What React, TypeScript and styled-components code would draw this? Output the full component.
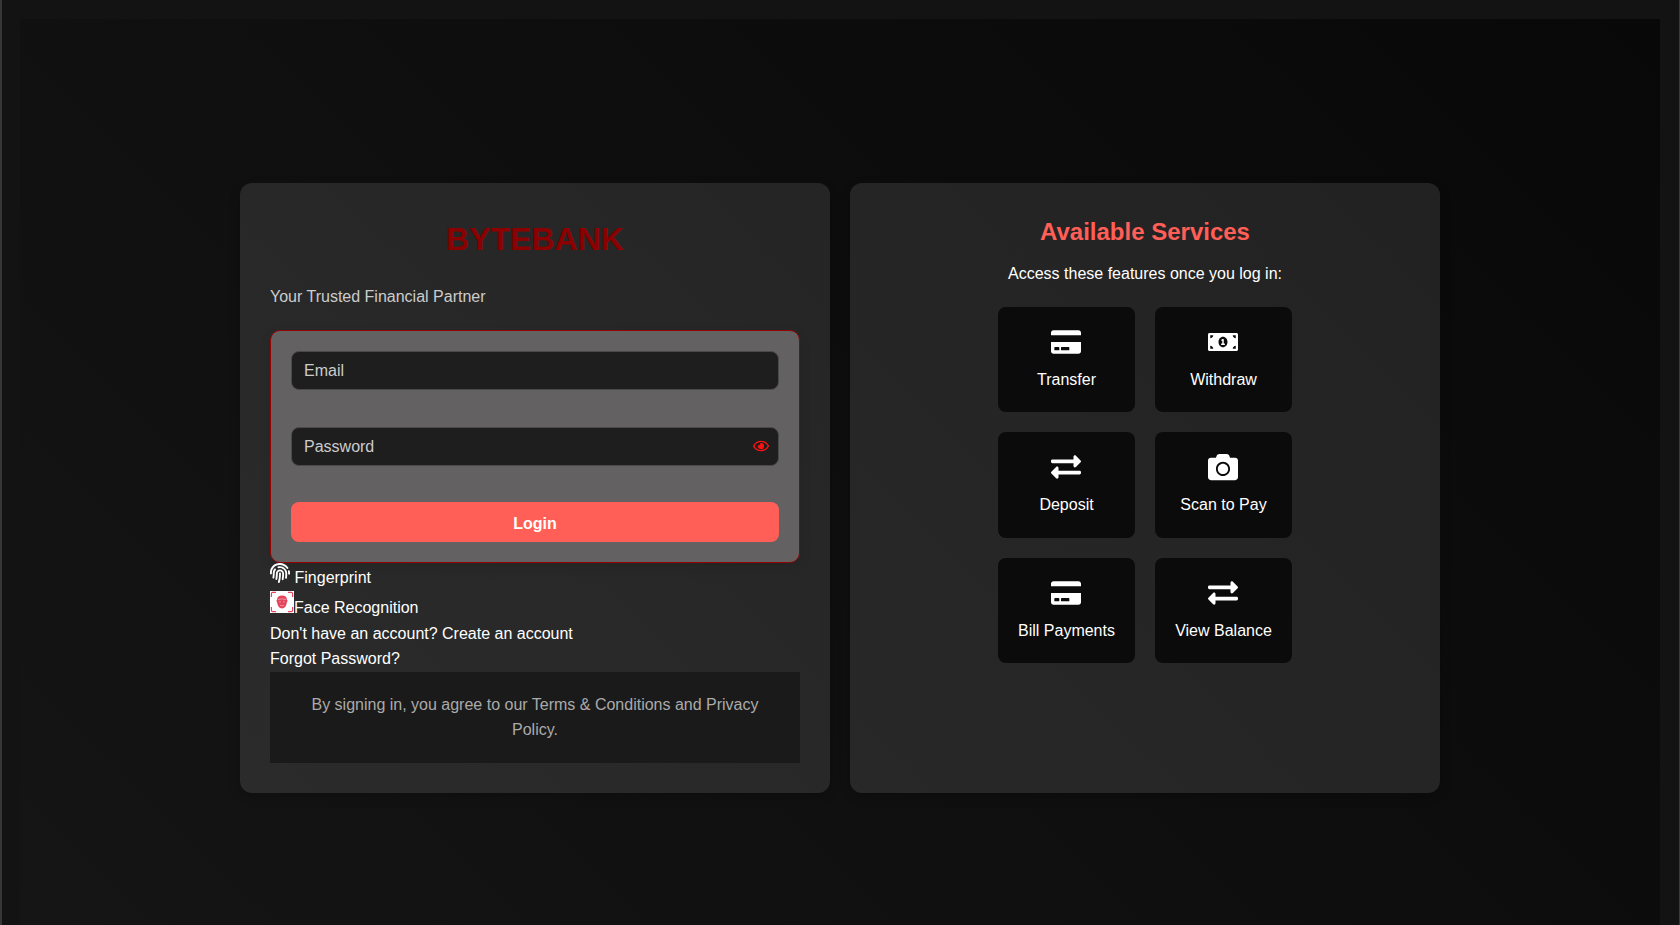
import React from "react";
import styled, { createGlobalStyle } from "styled-components";
import { FaCreditCard, FaMoneyBillAlt, FaExchangeAlt, FaCamera, FaRegEye, FaFingerprint } from "react-icons/fa";

const GlobalStyle = createGlobalStyle`
  * { box-sizing: border-box; }
  body {
    margin: 0;
    background: #131313;
    color: #fff;
    font: 16px/25.6px "Liberation Sans", Arial, sans-serif;
    overflow: hidden;
  }
`;

const Frame = styled.div`
  height: 925px;
  padding: 19px 19px 0 18px;
  border-left: 2px solid #373737;
  border-right: 1px solid #3a3a3a;
  overflow: hidden;
`;

const Page = styled.main`
  height: 937px;
  display: flex;
  justify-content: center;
  align-items: center;
  gap: 20px;
  background: linear-gradient(45deg, #151515, #080808);
`;

const Panel = styled.section<{ $center?: boolean }>`
  width: 590px;
  height: 610px;
  padding: 30px;
  border-radius: 12px;
  background: rgba(255, 255, 255, 0.102);
  box-shadow: 0 4px 12px rgba(0, 0, 0, 0.2);
  text-align: ${(p) => (p.$center ? "center" : "left")};
`;

const Brand = styled.h1`
  margin: 0 0 19.200px;
  font-size: 32px;
  line-height: 52px;
  color: #8b0000;
  text-align: center;
`;

const Tagline = styled.p`
  margin: 0 0 20.6px;
  color: #ccc;
`;

const Form = styled.form`
  display: flex;
  flex-direction: column;
  height: 233px;
  padding: 20px;
  border: 1px solid #920404;
  border-radius: 10px;
  background: #646162;
  box-shadow: 0 4px 12px rgba(0, 0, 0, 0.1);
`;

const Field = styled.div`
  display: flex;
  align-items: center;
  flex-shrink: 0;
  height: 39px;
  margin: 0 0 37px;
  padding-right: 9px;
  border: 1px solid #4a4a4a;
  border-radius: 8px;
  background: #1e1e1e;
  color: #f11;
`;

const Input = styled.input`
  flex: 1;
  min-width: 0;
  padding: 0 12px;
  border: 0;
  outline: 0;
  background: transparent;
  color: #ccc;
  font: inherit;
  &::placeholder { color: #ccc; opacity: 1; }
`;

const LoginButton = styled.button`
  flex-shrink: 0;
  height: 40px;
  margin-top: -0.5px;
  padding: 3px 0 0;
  border: 0;
  border-radius: 8px;
  background: #ff5f57;
  color: #fff;
  font: bold 16px "Liberation Sans", Arial, sans-serif;
`;

const Option = styled.div<{ $height: number; $gap?: number }>`
  display: flex;
  align-items: flex-start;
  gap: ${(p) => p.$gap ?? 0}px;
  height: ${(p) => p.$height}px;
`;

const OptionLabel = styled.span<{ $drop: number }>`
  padding-top: ${(p) => p.$drop}px;
`;

const LinkLine = styled.div`
  height: 25.5px;
`;

const Legal = styled.footer`
  height: 91px;
  padding: 20px;
  background: #1a1a1a;
  color: #aaa;
  text-align: center;
`;

const Heading = styled.h2`
  margin: 0 0 10px;
  font-size: 24px;
  line-height: 38.4px;
  color: #ff5f57;
`;

const Intro = styled.p`
  margin: 0 0 20px;
`;

const Services = styled.div`
  display: grid;
  grid-template-columns: 137px 137px;
  justify-content: center;
  gap: 20px;
`;

const Service = styled.div`
  display: flex;
  flex-direction: column;
  align-items: center;
  height: 105.6px;
  padding-top: 20px;
  border-radius: 8px;
  background: #0b0b0b;
`;

const ServiceIcon = styled.span`
  display: flex;
  padding-right: 1px;
`;

const ServiceName = styled.span`
  margin-top: 10px;
`;

const FaceIcon = () => (
  <svg width="24" height="22" viewBox="0 0 24 22">
    <path fill="#fff" d="M0 0h24v22H0z" />
    <path fill="none" stroke="#e4455c" strokeWidth="1.200" d="M1.400 6V2.700Q1.400 1.400 2.700 1.400H6M18 1.400h3.300q1.300 0 1.300 1.300V6M22.600 16v3.300q0 1.300-1.300 1.300H18M6 20.600H2.700q-1.300 0-1.300-1.300V16" />
    <path fill="#e4455c" d="M7.200 8.300C7 5.700 9 4.400 12 4.400s5 1.300 4.800 3.900l.8 1.400-.9 2.400c-.3 2.800-2 5.400-4.700 5.400s-4.400-2.600-4.700-5.400l-.9-2.400z" />
    <path fill="none" stroke="#fff" strokeWidth=".6" opacity=".7" d="M8 8.700Q12 6.900 16 8.700M9.200 10.900h1.800M13 10.900h1.800M10 14.200q2 1.400 4 0" />
  </svg>
);

const services = [
  { name: "Transfer", Icon: FaCreditCard },
  { name: "Withdraw", Icon: FaMoneyBillAlt },
  { name: "Deposit", Icon: FaExchangeAlt },
  { name: "Scan to Pay", Icon: FaCamera },
  { name: "Bill Payments", Icon: FaCreditCard },
  { name: "View Balance", Icon: FaExchangeAlt },
];

export default function App() {
  return (
    <>
      <GlobalStyle />
      <Frame>
        <Page>
          <Panel>
            <Brand>BYTEBANK</Brand>
            <Tagline>Your Trusted Financial Partner</Tagline>
            <Form>
              <Field><Input placeholder="Email" /></Field>
              <Field><Input placeholder="Password" /><FaRegEye size={16} /></Field>
              <LoginButton type="button">Login</LoginButton>
            </Form>
            <Option $height={28} $gap={4.5}>
              <FaFingerprint size={20} />
              <OptionLabel $drop={2.5}>Fingerprint</OptionLabel>
            </Option>
            <Option $height={30}>
              <FaceIcon />
              <OptionLabel $drop={4}>Face Recognition</OptionLabel>
            </Option>
            <LinkLine>Don't have an account? Create an account</LinkLine>
            <LinkLine>Forgot Password?</LinkLine>
            <Legal>By signing in, you agree to our Terms &amp; Conditions and Privacy Policy.</Legal>
          </Panel>
          <Panel $center>
            <Heading>Available Services</Heading>
            <Intro>Access these features once you log in:</Intro>
            <Services>
              {services.map(({ name, Icon }) => (
                <Service key={name}>
                  <ServiceIcon><Icon size={30} /></ServiceIcon>
                  <ServiceName>{name}</ServiceName>
                </Service>
              ))}
            </Services>
          </Panel>
        </Page>
      </Frame>
    </>
  );
}
